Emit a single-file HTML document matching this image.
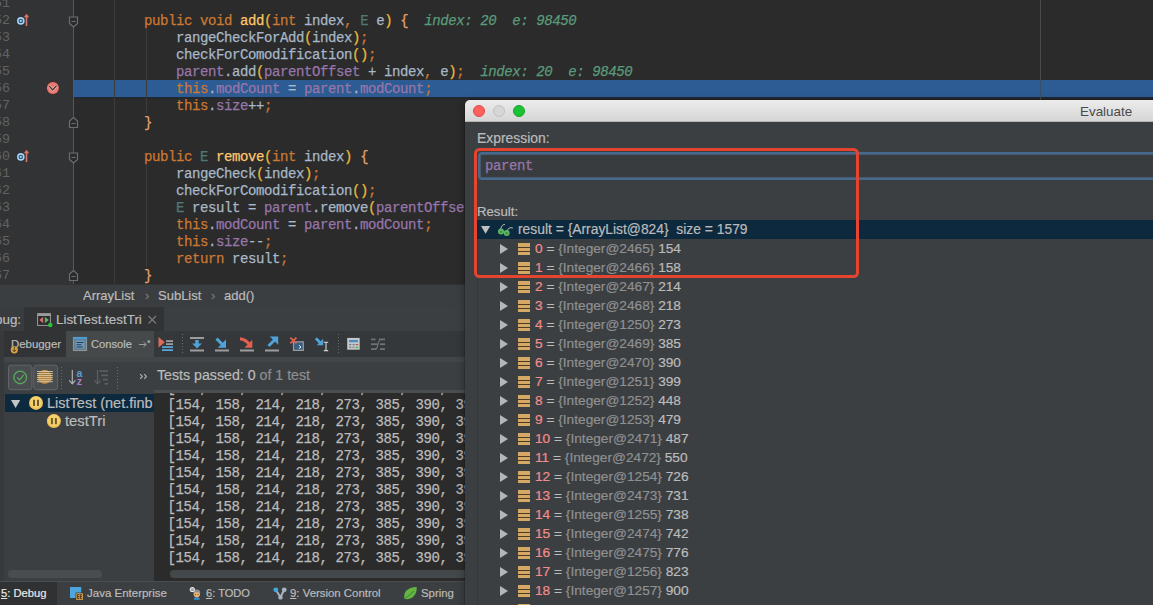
<!DOCTYPE html>
<html><head><meta charset="utf-8">
<style>
*{box-sizing:border-box}
html,body{margin:0;padding:0}
body{width:1153px;height:605px;overflow:hidden;position:relative;background:#3C3F41;font-family:"Liberation Sans",sans-serif}
.a{position:absolute}
.t{position:absolute;white-space:pre;line-height:17px;-webkit-text-stroke:0.2px}
.code{position:absolute;left:112px;white-space:pre;font-family:"Liberation Mono",monospace;font-size:14px;letter-spacing:-0.4px;-webkit-text-stroke:0.25px;line-height:17px;color:#A9B7C6;margin-top:1px}
.ln{position:absolute;left:-30px;width:40px;text-align:right;white-space:pre;font-family:"Liberation Mono",monospace;font-size:13.333px;line-height:17px;color:#606366}
.k{color:#CC7832}.m{color:#FFC66D}.f{color:#9876AA}.tp{color:#507874}.p{color:#E8BA36}.br{color:#E8A06A}
.iv{color:#5B9B7B;font-style:italic}
.sep{position:absolute;width:1px;background-image:linear-gradient(#6a6d70 50%,transparent 50%);background-size:1px 3px}
.tri{position:absolute;left:500px;width:0;height:0;border-left:8px solid #B4B6B8;border-top:5px solid transparent;border-bottom:5px solid transparent}
.arr{position:absolute;left:518px;width:12px;height:12px;background:linear-gradient(#D6A865 0 4px,#4A3B25 4px 5px,#D6A865 5px 8px,#4A3B25 8px 9px,#D6A865 9px 12px)}
.row{left:535px;font-size:13.7px;color:#BBBBBB}
.rn{color:#F08D8D}.rg{color:#8E9092}
</style></head><body>

<!-- ============ EDITOR ============ -->
<div class="a" style="left:0;top:0;width:1153px;height:284px;background:#2B2B2B"></div>
<div class="a" style="left:0;top:0;width:74px;height:284px;background:#313335"></div>
<!-- highlight -->
<div class="a" style="left:74px;top:80px;width:1079px;height:17px;background:#2D5C94"></div>
<div class="a" style="left:74px;top:97px;width:1079px;height:2px;background:linear-gradient(#1E2A38,#25282B)"></div>
<!-- right margin -->
<div class="a" style="left:1040px;top:0;width:1px;height:284px;background:#4A4A4A"></div>
<div class="a" style="left:1040px;top:80px;width:1px;height:17px;background:#3A4E66"></div>
<!-- fold line -->
<div class="a" style="left:73px;top:0;width:1px;height:284px;background:#55585A"></div>
<!-- indent guides -->
<div class="a" style="left:114px;top:0;width:1px;height:284px;background:#3B3B3B"></div>
<div class="a" style="left:146px;top:29px;width:1px;height:85px;background:#3B3B3B"></div>
<div class="a" style="left:146px;top:165px;width:1px;height:102px;background:#3B3B3B"></div>

<svg class="a" style="left:0;top:0" width="90" height="284" viewBox="0 0 90 284">
 <g fill="#2B2B2B" stroke="#6B6E70" stroke-width="1.2">
  <path d="M69.5,17 H77.5 V23.5 L73.5,27 L69.5,23.5 Z"/>
  <path d="M69.5,153 H77.5 V159.5 L73.5,163 L69.5,159.5 Z"/>
  <path d="M69.5,127.5 H77.5 V121 L73.5,117.5 L69.5,121 Z"/>
  <path d="M69.5,280.5 H77.5 V274 L73.5,270.5 L69.5,274 Z"/>
 </g>
 <g stroke="#6B6E70" stroke-width="1.2">
  <path d="M71.5,21.5 H75.5 M71.5,157.5 H75.5 M71.5,123.5 H75.5 M71.5,276.5 H75.5"/>
 </g>
 <!-- override icons -->
 <g id="ov">
  <circle cx="20.8" cy="20.9" r="4.4" fill="#1D3A50"/>
  <circle cx="20.8" cy="20.9" r="3.8" fill="#A9CFEA"/>
  <circle cx="20.8" cy="20.9" r="2.2" fill="#27506E"/>
  <circle cx="20.8" cy="20.9" r="1.1" fill="#A4D6F2"/>
  <path d="M26.5,26 V16.5" stroke="#D9766A" stroke-width="1.6"/>
  <path d="M23.8,17.3 L26.5,13.8 L29.2,17.3 Z" fill="#D9766A"/>
 </g>
 <use href="#ov" y="136"/>
 <!-- breakpoint -->
 <circle cx="52.9" cy="87.9" r="6.6" fill="#5A2424"/>
 <circle cx="52.9" cy="87.9" r="6" fill="#E67A70"/>
 <path d="M49.3,86.1 L52.7,90 L56.5,85.6" fill="none" stroke="#F3C2BC" stroke-width="2.6"/>
 <path d="M49.3,86.1 L52.7,90 L56.5,85.6" fill="none" stroke="#4A3434" stroke-width="1.4"/>
</svg>
<!-- line numbers -->
<div class="ln" style="top:-5px">51</div>
<div class="ln" style="top:12px">52</div>
<div class="ln" style="top:29px">53</div>
<div class="ln" style="top:46px">54</div>
<div class="ln" style="top:63px">55</div>
<div class="ln" style="top:80px">56</div>
<div class="ln" style="top:97px">57</div>
<div class="ln" style="top:114px">58</div>
<div class="ln" style="top:131px">59</div>
<div class="ln" style="top:148px">60</div>
<div class="ln" style="top:165px">61</div>
<div class="ln" style="top:182px">62</div>
<div class="ln" style="top:199px">63</div>
<div class="ln" style="top:216px">64</div>
<div class="ln" style="top:233px">65</div>
<div class="ln" style="top:250px">66</div>
<div class="ln" style="top:267px">67</div>

<!-- code -->
<div class="code" style="top:12px">    <span class="k">public void </span><span class="m">add</span><span class="p">(</span><span class="k">int </span>index<span class="k">, </span><span class="tp">E </span>e<span class="p">)</span> <span class="br">{</span>  <span class="iv">index: 20  e: 98450</span></div>
<div class="code" style="top:29px">        rangeCheckForAdd<span class="p">(</span>index<span class="p">)</span><span class="k">;</span></div>
<div class="code" style="top:46px">        checkForComodification<span class="p">()</span><span class="k">;</span></div>
<div class="code" style="top:63px">        <span class="f">parent</span>.add<span class="p">(</span><span class="f">parentOffset</span> + index<span class="k">, </span>e<span class="p">)</span><span class="k">;</span>  <span class="iv">index: 20  e: 98450</span></div>
<div class="code" style="top:80px">        <span class="k">this</span>.<span class="f">modCount</span> = <span class="f">parent</span>.<span class="f">modCount</span><span class="k">;</span></div>
<div class="code" style="top:97px">        <span class="k">this</span>.<span class="f">size</span>++<span class="k">;</span></div>
<div class="code" style="top:114px">    <span class="br">}</span></div>
<div class="code" style="top:148px">    <span class="k">public </span><span class="tp">E </span><span class="m">remove</span><span class="p">(</span><span class="k">int </span>index<span class="p">)</span> <span class="br">{</span></div>
<div class="code" style="top:165px">        rangeCheck<span class="p">(</span>index<span class="p">)</span><span class="k">;</span></div>
<div class="code" style="top:182px">        checkForComodification<span class="p">()</span><span class="k">;</span></div>
<div class="code" style="top:199px">        <span class="tp">E </span>result = <span class="f">parent</span>.remove<span class="p">(</span><span class="f">parentOffset</span> + index<span class="p">)</span><span class="k">;</span></div>
<div class="code" style="top:216px">        <span class="k">this</span>.<span class="f">modCount</span> = <span class="f">parent</span>.<span class="f">modCount</span><span class="k">;</span></div>
<div class="code" style="top:233px">        <span class="k">this</span>.<span class="f">size</span>--<span class="k">;</span></div>
<div class="code" style="top:250px">        <span class="k">return </span>result<span class="k">;</span></div>
<div class="code" style="top:267px">    <span class="br">}</span></div>

<!-- BREADCRUMB -->
<div class="a" style="left:0;top:284px;width:1153px;height:23px;background:#3B3E40;border-top:1px solid #323334"></div>
<div class="t" style="left:83px;top:287px;font-size:13px;color:#BBBBBB">ArrayList</div>
<div class="t" style="left:145px;top:287px;font-size:13px;color:#77797B">›</div>
<div class="t" style="left:158px;top:287px;font-size:13px;color:#BBBBBB">SubList</div>
<div class="t" style="left:211px;top:287px;font-size:13px;color:#77797B">›</div>
<div class="t" style="left:224px;top:287px;font-size:13px;color:#BBBBBB">add()</div>

<!-- DEBUG TAB BAR -->
<div class="a" style="left:0;top:307px;width:1153px;height:24px;background:#3C3F41"></div>
<div class="a" style="left:0;top:307px;width:24px;height:24px;background:#393C3E"></div>
<div class="a" style="left:24px;top:307px;width:140px;height:24px;background:#313335"></div>
<div class="t" style="left:-5px;top:311px;font-size:13.4px;color:#BBBBBB">bug:</div>
<div class="t" style="left:56px;top:311px;font-size:13.4px;color:#BBBBBB">ListTest.testTri</div>

<!-- DEBUGGER TOOLBAR -->
<div class="a" style="left:0;top:331px;width:1153px;height:26px;background:#35383A"></div>
<div class="a" style="left:0;top:331px;width:4px;height:250px;background:#37393B"></div>
<div class="a" style="left:4px;top:331px;width:1px;height:250px;background:#2E3032"></div>
<div class="a" style="left:4px;top:331px;width:62px;height:26px;background:#313335"></div>
<div class="a" style="left:66px;top:331px;width:88px;height:26px;background:#45494A"></div>
<div class="t" style="left:11px;top:336px;font-size:11.4px;color:#BBBBBB">Debugger</div>
<div class="t" style="left:91px;top:336px;font-size:11.2px;color:#BBBBBB">Console</div>
<div class="a" style="left:4px;top:357px;width:1153px;height:5px;background:#434648"></div>

<!-- TEST TOOLBAR -->
<div class="a" style="left:4px;top:362px;width:1153px;height:29px;background:#3C3F41"></div>
<div class="t" style="left:157px;top:367px;font-size:14.2px;color:#BBBBBB">Tests passed: 0 <span style="color:#8C8E90">of 1 test</span></div>

<!-- TREE -->
<div class="a" style="left:4px;top:391px;width:150px;height:190px;background:#3C3F41"></div>
<div class="a" style="left:5px;top:394px;width:149px;height:18px;background:#0D293E"></div>
<div class="t" style="left:47px;top:395px;font-size:14.5px;color:#BBBBBB">ListTest (net.finb</div>
<div class="t" style="left:65px;top:413px;font-size:14.8px;color:#BBBBBB">testTri</div>
<div class="a" style="left:8px;top:570px;width:94px;height:8px;border-radius:4px;background:#4A4D4F"></div>

<!-- CONSOLE -->
<div class="a" style="left:154px;top:390px;width:311px;height:191px;background:#2B2B2B;border-top:3px solid #4B4E50"></div>
<div class="a" style="left:154px;top:393px;width:311px;height:188px;overflow:hidden">
 <div class="code" style="left:13.5px;top:-14px;color:#BBBBBB">[154, 158, 214, 218, 273, 385, 390, 399
[154, 158, 214, 218, 273, 385, 390, 399
[154, 158, 214, 218, 273, 385, 390, 399
[154, 158, 214, 218, 273, 385, 390, 399
[154, 158, 214, 218, 273, 385, 390, 399
[154, 158, 214, 218, 273, 385, 390, 399
[154, 158, 214, 218, 273, 385, 390, 399
[154, 158, 214, 218, 273, 385, 390, 399
[154, 158, 214, 218, 273, 385, 390, 399
[154, 158, 214, 218, 273, 385, 390, 399
[154, 158, 214, 218, 273, 385, 390, 399</div>
 <div class="a" style="left:16px;top:177px;width:300px;height:8px;border-radius:4px;background:#45484A"></div>
</div>

<!-- BOTTOM BAR -->
<div class="a" style="left:0;top:581px;width:1153px;height:24px;background:#3C3F41;border-top:1px solid #4A4D4F"></div>
<div class="a" style="left:0;top:582px;width:57px;height:23px;background:#2F3133"></div>
<div class="t" style="left:1px;top:585px;font-size:11.2px;color:#E8E8E8"><u>5</u>: Debug</div>
<div class="t" style="left:87px;top:585px;font-size:11.5px;color:#BBBBBB">Java Enterprise</div>
<div class="t" style="left:206px;top:585px;font-size:11.1px;color:#BBBBBB"><u>6</u>: TODO</div>
<div class="t" style="left:290px;top:585px;font-size:11.4px;color:#BBBBBB"><u>9</u>: Version Control</div>
<div class="t" style="left:421px;top:585px;font-size:11.4px;color:#BBBBBB">Spring</div>


<!-- ICONS lower-left -->
<svg class="a" style="left:0;top:300px" width="470" height="305" viewBox="0 300 470 305">
 <!-- debug tab icon -->
 <rect x="37.6" y="313.6" width="12.8" height="11.8" fill="#2A2C2E" stroke="#9C9C9C" stroke-width="1"/>
 <rect x="38" y="314" width="12" height="2" fill="#9C9C9C"/>
 <path d="M39.3,320 L43.2,316.8 L43.2,323.2 Z" fill="#D8706A"/>
 <path d="M48.8,320 L44.9,316.8 L44.9,323.2 Z" fill="#5FB272"/>
 <circle cx="50.3" cy="325" r="2.2" fill="#22C933"/>
 <!-- close x -->
 <path d="M148.5,316 L156,323.5 M156,316 L148.5,323.5" stroke="#7A7D80" stroke-width="1.1"/>
 <!-- debugger icon -->
 <circle cx="14.3" cy="349.8" r="3.6" fill="#D9A343"/>
 <path d="M14.3,347 V351.5 M12.4,349.8 L14.3,351.8 L16.2,349.8" fill="none" stroke="#5A4520" stroke-width="1"/>
 <!-- console icon -->
 <rect x="73.5" y="337.5" width="13" height="13" fill="#5F7D95" stroke="#8E9092" stroke-width="1.2"/>
 <rect x="73" y="337" width="14" height="2.2" fill="#4E9BD2"/>
 <rect x="75.5" y="340.5" width="9" height="8" fill="#6E9CC0"/>
 <path d="M76.5,342.5 H83.5 M76.5,344.8 H81.5 M76.5,347 H83" stroke="#2C3A46" stroke-width="1"/>
 <!-- pin -->
 <path d="M139,344.5 H146 M143.5,342 L146.3,344.5 L143.5,347" fill="none" stroke="#9A9C9E" stroke-width="1"/>
 <rect x="147.5" y="340.3" width="2.6" height="2.6" fill="#9A9C9E"/>
 <!-- show exec point -->
 <path d="M158.5,336.9 L158.5,347.6 L164.8,342.3 Z" fill="#E06A5A"/>
 <rect x="166" y="340.2" width="7" height="1.8" fill="#9C9C9C"/>
 <rect x="166" y="343.2" width="7" height="1.8" fill="#9C9C9C"/>
 <rect x="162" y="346.2" width="11" height="1.8" fill="#5BA2D4"/>
 <rect x="162" y="349.2" width="11" height="1.8" fill="#5BA2D4"/>
 <!-- dotted separators -->
 <g fill="#6A6D70">
  <rect x="182" y="334" width="1" height="1"/><rect x="182" y="337" width="1" height="1"/><rect x="182" y="340" width="1" height="1"/><rect x="182" y="343" width="1" height="1"/><rect x="182" y="346" width="1" height="1"/><rect x="182" y="349" width="1" height="1"/><rect x="182" y="352" width="1" height="1"/>
  <rect x="338" y="334" width="1" height="1"/><rect x="338" y="337" width="1" height="1"/><rect x="338" y="340" width="1" height="1"/><rect x="338" y="343" width="1" height="1"/><rect x="338" y="346" width="1" height="1"/><rect x="338" y="349" width="1" height="1"/><rect x="338" y="352" width="1" height="1"/>
  <rect x="61" y="367" width="1" height="1"/><rect x="61" y="370" width="1" height="1"/><rect x="61" y="373" width="1" height="1"/><rect x="61" y="376" width="1" height="1"/><rect x="61" y="379" width="1" height="1"/><rect x="61" y="382" width="1" height="1"/><rect x="61" y="385" width="1" height="1"/><rect x="61" y="388" width="1" height="1"/>
  <rect x="117" y="367" width="1" height="1"/><rect x="117" y="370" width="1" height="1"/><rect x="117" y="373" width="1" height="1"/><rect x="117" y="376" width="1" height="1"/><rect x="117" y="379" width="1" height="1"/><rect x="117" y="382" width="1" height="1"/><rect x="117" y="385" width="1" height="1"/><rect x="117" y="388" width="1" height="1"/>
 </g>
 <!-- step over -->
 <rect x="190" y="337" width="14" height="2" fill="#9C9C9C"/>
 <rect x="190" y="349.5" width="14" height="2" fill="#9C9C9C"/>
 <rect x="195.3" y="340" width="3.4" height="4" fill="#4FA3D9"/>
 <path d="M192.2,343.4 L201.8,343.4 L197,348.4 Z" fill="#4FA3D9"/>
 <!-- step into -->
 <path d="M216.5,338.6 L223.2,345.3" stroke="#4FA3D9" stroke-width="3"/>
 <path d="M226,339.5 L226,347.8 L217.7,347.8 Z" fill="#4FA3D9"/>
 <rect x="215" y="349.5" width="14" height="2" fill="#9C9C9C"/>
 <!-- force step into -->
 <path d="M240,338.8 C244,339.3 247,341 249.5,344.8" fill="none" stroke="#E5604F" stroke-width="3"/>
 <path d="M252.3,339.8 L252.3,347.8 L244.5,347.8 Z" fill="#E5604F"/>
 <rect x="240" y="349.5" width="14" height="2" fill="#9C9C9C"/>
 <!-- step out -->
 <path d="M268.5,346 L275.5,339" stroke="#4FA3D9" stroke-width="3"/>
 <path d="M278.2,336.5 L278.2,344.8 L269.8,336.5 Z" fill="#4FA3D9"/>
 <rect x="265" y="349.5" width="14" height="2" fill="#9C9C9C"/>
 <!-- drop frame -->
 <rect x="293.5" y="341.8" width="9.8" height="8.6" fill="#3A5F80" stroke="#9C9C9C" stroke-width="1.2"/>
 <path d="M299,345.3 L301,347 L299,348.7" fill="none" stroke="#E8F0F8" stroke-width="1"/>
 <path d="M290.3,337.6 L296.5,343.3 M296.5,337.6 L290.3,343.3" stroke="#E5604F" stroke-width="1.8"/>
 <!-- run to cursor -->
 <path d="M315.8,338.3 L320.8,343.3" stroke="#4FA3D9" stroke-width="2.8"/>
 <path d="M323.2,338.8 L323.2,345.2 L316.8,345.2 Z" fill="#4FA3D9"/>
 <path d="M326,342.6 V350.2 M323.8,342.2 H328.2 M323.8,350.6 H328.2" stroke="#D4D4D4" stroke-width="1.1"/>
 <!-- evaluate -->
 <rect x="347.2" y="337.9" width="12.5" height="11.8" fill="#C4C7C9"/>
 <rect x="349" y="340" width="9" height="2.2" fill="#4C8EC4"/>
 <rect x="349.3" y="344" width="2" height="1.2" fill="#7B6E74"/><rect x="352.5" y="344" width="2" height="1.2" fill="#6F7C8A"/><rect x="355.6" y="344" width="2.6" height="1.2" fill="#C0534B"/>
 <rect x="349.3" y="346.6" width="2" height="1.2" fill="#8B7772"/><rect x="352.5" y="346.6" width="2" height="1.2" fill="#76847A"/><rect x="355.6" y="346.6" width="2.6" height="1.6" fill="#4FBF5A"/>
 <!-- trace -->
 <g fill="#6F7275">
  <rect x="371" y="338.5" width="4.5" height="1.8"/><rect x="379" y="338.5" width="6" height="1.8"/>
  <rect x="371" y="343.3" width="6.5" height="1.8"/><rect x="380" y="343.3" width="5" height="1.8"/>
  <rect x="371" y="348.2" width="5.5" height="1.8"/><rect x="380" y="348.2" width="5" height="1.8"/>
 </g>
 <path d="M376.5,349 C378,346 378,341 380,339.4" fill="none" stroke="#6F7275" stroke-width="1.2"/>

 <!-- test toolbar buttons -->
 <rect x="8.5" y="365.2" width="23.5" height="24.5" rx="2.5" fill="#4A4D4F" stroke="#626568" stroke-width="1"/>
 <rect x="33.8" y="365.2" width="23.8" height="24.5" rx="2.5" fill="#4A4D4F" stroke="#626568" stroke-width="1"/>
 <circle cx="20.2" cy="377.4" r="6.3" fill="none" stroke="#56A55A" stroke-width="1.4"/>
 <path d="M17.2,377.3 L19.6,379.9 L23.8,374.9" fill="none" stroke="#56A55A" stroke-width="1.4"/>
 <defs><clipPath id="cc"><circle cx="44.7" cy="376.9" r="6.9"/></clipPath></defs>
 <circle cx="44.7" cy="376.9" r="6.9" fill="#E2A54F"/>
 <g clip-path="url(#cc)" fill="#8A6533"><rect x="37" y="372.30" width="16" height="0.9"/><rect x="37" y="374.36" width="16" height="0.9"/><rect x="37" y="376.42" width="16" height="0.9"/><rect x="37" y="378.48" width="16" height="0.9"/><rect x="37" y="380.54" width="16" height="0.9"/><rect x="37" y="382.60" width="16" height="0.9"/></g>
 <g fill="#D9C7A3"><rect x="37" y="371.00" width="15.8" height="0.9"/><rect x="37" y="373.06" width="15.8" height="0.9"/><rect x="37" y="375.12" width="15.8" height="0.9"/><rect x="37" y="377.18" width="15.8" height="0.9"/><rect x="37" y="379.24" width="15.8" height="0.9"/><rect x="37" y="381.30" width="15.8" height="0.9"/></g>
 <!-- sort az -->
 <path d="M72.3,370 V383.5 M69.2,380.4 L72.3,383.8 L75.4,380.4" fill="none" stroke="#AFB1B3" stroke-width="1.2"/>
 <text x="76.4" y="376.6" font-family="Liberation Sans" font-size="10.5" font-weight="bold" fill="#5A9BD6">a</text>
 <text x="76.8" y="384.8" font-family="Liberation Sans" font-size="10.5" font-weight="bold" fill="#B07ACC">z</text>
 <!-- sort by duration disabled -->
 <path d="M97.5,370 V383.5 M94.5,380.4 L97.5,383.8 L100.5,380.4" fill="none" stroke="#5D6062" stroke-width="1.2"/>
 <g fill="#5D6062"><rect x="99.5" y="370.2" width="8.5" height="1.6"/><rect x="101.2" y="374.6" width="6.8" height="1.6"/><rect x="103" y="378.8" width="5" height="1.6"/><rect x="104.6" y="383" width="3.4" height="1.6"/></g>
 <!-- chevrons -->
 <path d="M140.2,374.2 L142.4,376.5 L140.2,378.8 M144.2,374.2 L146.4,376.5 L144.2,378.8" fill="none" stroke="#AFB1B3" stroke-width="1.1"/>

 <!-- tree icons -->
 <path d="M11,400 L20.2,400 L15.6,408 Z" fill="#C2C4C6"/>
 <g id="pz">
  <circle cx="36" cy="402.9" r="7" fill="#F0C057"/>
  <circle cx="36" cy="402.2" r="5.8" fill="#F6D26E"/>
  <rect x="33" y="399.8" width="2" height="6.2" fill="#6E5B2C"/>
  <rect x="37" y="399.8" width="2" height="6.2" fill="#6E5B2C"/>
 </g>
 <use href="#pz" x="17.9" y="18.2"/>

 <!-- bottom bar icons -->
 <rect x="70" y="587" width="11.2" height="11" fill="#4EA6DD"/>
 <rect x="75.6" y="592.6" width="7.6" height="7.6" fill="#2E3133"/>
 <rect x="76.2" y="593.2" width="6.8" height="6.8" fill="#C79A55"/>
 <path d="M77.6,594.6 H79.2 M77.6,596.6 H79.2 M77.6,598.6 H79.2 M77.6,594.6 V598.6 M80.4,594.6 H82 M80.4,596.6 H82 M80.4,598.6 H82 M80.4,594.6 V598.6" stroke="#4A3410" stroke-width="0.9"/>
 <!-- todo person -->
 <path d="M193.8,599.8 C193.8,597.8 195,597.2 196.8,597.2 C198.6,597.2 199.8,597.8 199.8,599.8 Z" fill="#3D8FD0"/>
 <circle cx="196.8" cy="594" r="3.2" fill="#E8B273"/>
 <path d="M193.4,593.4 C193.5,590.2 195.2,589.6 197,589.6 C199.2,589.6 200.4,590.8 200.2,593.2 C198,591.8 195.5,592 193.4,593.4 Z" fill="#8D9093"/>
 <circle cx="195.6" cy="594.6" r="0.5" fill="#4A3A2A"/><circle cx="198" cy="594.6" r="0.5" fill="#4A3A2A"/>
 <circle cx="192.3" cy="589.5" r="2.6" fill="#EDEDED"/>
 <path d="M190.8,589 H193.8 M190.8,590.3 H193.8" stroke="#555" stroke-width="0.7"/>
 <!-- vcs -->
 <path d="M275.8,589.8 L280.5,597.2 L284.2,589.8" fill="none" stroke="#A5B2BF" stroke-width="2"/>
 <circle cx="275.8" cy="589.8" r="2.4" fill="#3FA9E0"/>
 <circle cx="284.2" cy="589.8" r="2.4" fill="#A5B2BF"/>
 <circle cx="280.5" cy="597.4" r="2.2" fill="#A5B2BF"/>
 <!-- spring leaf -->
 <path d="M404.5,599 C403,592 407,587.5 416.7,587 C417.2,595 412,600 404.5,599 Z" fill="#62B543"/>
 <path d="M405,598.5 C408,596 411,594 414,591" fill="none" stroke="#3B7A2A" stroke-width="0.9"/>
</svg>

<!-- ============ EVALUATE DIALOG ============ -->
<div class="a" style="left:465px;top:100px;width:700px;height:520px;background:#3C3F41;border-top-left-radius:5px;overflow:hidden;box-shadow:0 0 0 0.5px rgba(0,0,0,0.3)"></div>
<div class="a" style="left:465px;top:100px;width:700px;height:520px;border-top-left-radius:5px;box-shadow:0 2px 10px rgba(0,0,0,0.35)"></div>
<div class="a" style="left:465px;top:100px;width:700px;height:520px;background:#3C3F41;border-top-left-radius:5px;overflow:hidden">
  <div class="a" style="left:0;top:0;width:700px;height:22px;background:linear-gradient(#ECECEC,#D6D6D6);border-bottom:1px solid #B5B5B5"></div>
</div>
<div class="a" style="left:473px;top:105px;width:12px;height:12px;border-radius:50%;background:#FC615D;border:1px solid #DF4744"></div>
<div class="a" style="left:493px;top:105px;width:12px;height:12px;border-radius:50%;background:#D6D6D6;border:1px solid #C2C2C2"></div>
<div class="a" style="left:513px;top:105px;width:12px;height:12px;border-radius:50%;background:#1BC236;border:1px solid #12A626"></div>
<div class="t" style="left:1080px;top:103px;font-size:13.4px;color:#4A4A4A;-webkit-text-stroke:0">Evaluate</div>

<div class="t" style="left:477px;top:130px;font-size:13.9px;color:#BBBBBB">Expression:</div>
<div class="a" style="left:478px;top:151.5px;width:700px;height:28px;background:#393C3E;border:2.5px solid #45698F;border-radius:4px;box-shadow:inset 0 0 0 0.5px #56769A"></div>
<div class="code" style="left:485px;top:157px;color:#9876AA">parent</div>
<div class="t" style="left:477px;top:203px;font-size:13.2px;color:#BBBBBB">Result:</div>

<!-- tree -->
<div class="a" style="left:477px;top:220px;width:676px;height:19px;background:#0D293E"></div>
<div class="a" style="left:477px;top:239px;width:1px;height:366px;background:#35383A"></div>
<div class="t" style="left:518px;top:221px;font-size:13.85px;color:#BBBBBB">result = {ArrayList@824}  size = 1579</div>
<svg class="a" style="left:477px;top:219px" width="40" height="21" viewBox="477 219 40 21">
 <path d="M481,226 L490.2,226 L485.6,233.8 Z" fill="#BDBFC1"/>
 <path d="M500.5,229.5 C501.5,226 503,224 505,224.6 M506.5,231 C508,228.8 510,227 512.8,228" fill="none" stroke="#C9CDD2" stroke-width="1"/>
 <circle cx="501" cy="231.6" r="3" fill="#5FB865"/>
 <circle cx="506.7" cy="233.1" r="3" fill="#5FB865"/>
 <circle cx="501" cy="231.8" r="1.3" fill="#3E8F48"/>
 <circle cx="506.7" cy="233.3" r="1.3" fill="#3E8F48"/>
</svg>

<!--ROWS-->
<div class="tri" style="top:243.5px"></div><div class="arr" style="top:242.5px"></div><div class="t row" style="top:240px"><span class="rn">0</span> = <span class="rg">{Integer@2465}</span> 154</div>
<div class="tri" style="top:262.5px"></div><div class="arr" style="top:261.5px"></div><div class="t row" style="top:259px"><span class="rn">1</span> = <span class="rg">{Integer@2466}</span> 158</div>
<div class="tri" style="top:281.5px"></div><div class="arr" style="top:280.5px"></div><div class="t row" style="top:278px"><span class="rn">2</span> = <span class="rg">{Integer@2467}</span> 214</div>
<div class="tri" style="top:300.5px"></div><div class="arr" style="top:299.5px"></div><div class="t row" style="top:297px"><span class="rn">3</span> = <span class="rg">{Integer@2468}</span> 218</div>
<div class="tri" style="top:319.5px"></div><div class="arr" style="top:318.5px"></div><div class="t row" style="top:316px"><span class="rn">4</span> = <span class="rg">{Integer@1250}</span> 273</div>
<div class="tri" style="top:338.5px"></div><div class="arr" style="top:337.5px"></div><div class="t row" style="top:335px"><span class="rn">5</span> = <span class="rg">{Integer@2469}</span> 385</div>
<div class="tri" style="top:357.5px"></div><div class="arr" style="top:356.5px"></div><div class="t row" style="top:354px"><span class="rn">6</span> = <span class="rg">{Integer@2470}</span> 390</div>
<div class="tri" style="top:376.5px"></div><div class="arr" style="top:375.5px"></div><div class="t row" style="top:373px"><span class="rn">7</span> = <span class="rg">{Integer@1251}</span> 399</div>
<div class="tri" style="top:395.5px"></div><div class="arr" style="top:394.5px"></div><div class="t row" style="top:392px"><span class="rn">8</span> = <span class="rg">{Integer@1252}</span> 448</div>
<div class="tri" style="top:414.5px"></div><div class="arr" style="top:413.5px"></div><div class="t row" style="top:411px"><span class="rn">9</span> = <span class="rg">{Integer@1253}</span> 479</div>
<div class="tri" style="top:433.5px"></div><div class="arr" style="top:432.5px"></div><div class="t row" style="top:430px"><span class="rn">10</span> = <span class="rg">{Integer@2471}</span> 487</div>
<div class="tri" style="top:452.5px"></div><div class="arr" style="top:451.5px"></div><div class="t row" style="top:449px"><span class="rn">11</span> = <span class="rg">{Integer@2472}</span> 550</div>
<div class="tri" style="top:471.5px"></div><div class="arr" style="top:470.5px"></div><div class="t row" style="top:468px"><span class="rn">12</span> = <span class="rg">{Integer@1254}</span> 726</div>
<div class="tri" style="top:490.5px"></div><div class="arr" style="top:489.5px"></div><div class="t row" style="top:487px"><span class="rn">13</span> = <span class="rg">{Integer@2473}</span> 731</div>
<div class="tri" style="top:509.5px"></div><div class="arr" style="top:508.5px"></div><div class="t row" style="top:506px"><span class="rn">14</span> = <span class="rg">{Integer@1255}</span> 738</div>
<div class="tri" style="top:528.5px"></div><div class="arr" style="top:527.5px"></div><div class="t row" style="top:525px"><span class="rn">15</span> = <span class="rg">{Integer@2474}</span> 742</div>
<div class="tri" style="top:547.5px"></div><div class="arr" style="top:546.5px"></div><div class="t row" style="top:544px"><span class="rn">16</span> = <span class="rg">{Integer@2475}</span> 776</div>
<div class="tri" style="top:566.5px"></div><div class="arr" style="top:565.5px"></div><div class="t row" style="top:563px"><span class="rn">17</span> = <span class="rg">{Integer@1256}</span> 823</div>
<div class="tri" style="top:585.5px"></div><div class="arr" style="top:584.5px"></div><div class="t row" style="top:582px"><span class="rn">18</span> = <span class="rg">{Integer@1257}</span> 900</div>
<div class="tri" style="top:604.5px"></div><div class="arr" style="top:603.5px"></div><div class="t row" style="top:601px"><span class="rn">19</span> = <span class="rg">{Integer@2476}</span> 947</div>
<!--/ROWS-->

<!-- red annotation box -->
<div class="a" style="left:474px;top:148px;width:385px;height:130px;border:3.4px solid #E5452E;border-radius:5.5px"></div>

</body></html>
